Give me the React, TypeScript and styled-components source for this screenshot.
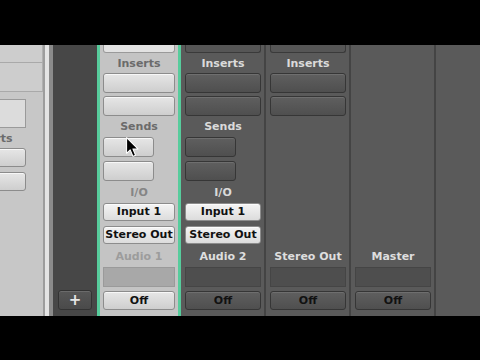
import styled, { createGlobalStyle } from "styled-components";

const GlobalStyle = createGlobalStyle`
  body {
    margin: 0;
    background: #000;
    font-family: "DejaVu Sans", "Liberation Sans", sans-serif;
  }
`;

type StripData = {
  name: string;
  selected?: boolean;
  inserts?: boolean;
  sends?: boolean;
  io?: boolean;
};

const strips: StripData[] = [
  { name: "Audio 1", selected: true, inserts: true, sends: true, io: true },
  { name: "Audio 2", inserts: true, sends: true, io: true },
  { name: "Stereo Out", inserts: true },
  { name: "Master" },
];

const App = () => {
  return (
    <Screen>
      <GlobalStyle />
      <Mixer>
        <LeftPanel>
          <PanelRow $h={18} />
          <PanelRow $h={29} />
          <Inspector>
            <Field />
            <Label $h={20} $tone="#6b6b6b">
              Inserts
            </Label>
            <SlotStack $gap={5}>
              <Slot $light $h={19} />
              <Slot $light $h={19} />
            </SlotStack>
          </Inspector>
        </LeftPanel>
        <Divider />
        <ToolColumn>
          <AddButton>+</AddButton>
        </ToolColumn>
        {strips.map((s) => (
          <Strip key={s.name} $selected={!!s.selected}>
            {s.inserts && (
              <>
                <TopStub $light={!!s.selected} />
                <Label $h={20} $tone={s.selected ? "#6b6b6b" : "#dadada"}>
                  Inserts
                </Label>
                <SlotStack>
                  <Slot $light={!!s.selected} />
                  <Slot $light={!!s.selected} />
                </SlotStack>
              </>
            )}
            {s.sends && (
              <>
                <Label $h={21} $tone={s.selected ? "#6b6b6b" : "#dadada"}>
                  Sends
                </Label>
                <SlotStack $gap={4}>
                  <Slot $light={!!s.selected} $narrow />
                  <Slot $light={!!s.selected} $narrow />
                </SlotStack>
              </>
            )}
            {s.io && (
              <>
                <Label $h={22} $tone={s.selected ? "#858585" : "#dadada"}>
                  I/O
                </Label>
                <SlotStack $gap={5}>
                  <Slot $light $bright $h={18}>
                    Input 1
                  </Slot>
                  <Slot $light $bright $h={18}>
                    Stereo Out
                  </Slot>
                </SlotStack>
              </>
            )}
            <Bottom>
              <Label $h={21} $tone={s.selected ? "#9c9c9c" : "#dedede"}>
                {s.name}
              </Label>
              <NameField $light={!!s.selected} />
              <Slot $light={!!s.selected} $h={19}>
                Off
              </Slot>
            </Bottom>
          </Strip>
        ))}
        <Filler />
      </Mixer>
      <Cursor width="14" height="21" viewBox="0 0 12 18">
        <path
          d="M0.5 0.5 L0.5 14 L3.6 11 L6 16.6 L8.2 15.6 L5.9 10.2 L10.2 10.2 Z"
          fill="#000"
          stroke="#fff"
          strokeWidth="0.9"
          strokeLinejoin="round"
        />
      </Cursor>
    </Screen>
  );
};

const Screen = styled.div`
  position: relative;
  width: 480px;
  height: 360px;
  background: #000;
  padding-top: 45px;
  box-sizing: border-box;
  overflow: hidden;
`;

const Mixer = styled.div`
  display: flex;
  height: 271px;
`;

const LeftPanel = styled.div`
  width: 45px;
  flex: none;
  background: #c7c7c7;
  border-right: 2px solid #9d9d9d;
  box-sizing: border-box;
  display: flex;
  flex-direction: column;
  overflow: hidden;
`;

const PanelRow = styled.div<{ $h: number }>`
  height: ${(p) => p.$h}px;
  flex: none;
  box-sizing: border-box;
  background: #cdcdcd;
  border-bottom: 1px solid #a9a9a9;
  border-right: 1px solid #b0b0b0;
`;

const Inspector = styled.div`
  width: 70px;
  margin-left: -44px;
  padding-top: 7px;
  display: flex;
  flex-direction: column;
`;

const Field = styled.div`
  height: 29px;
  background: #dcdcdc;
  border: 1px solid #9a9a9a;
  box-sizing: border-box;
`;

const Divider = styled.div`
  width: 8px;
  flex: none;
  background: linear-gradient(to right, #e4e4e4 0 4px, #8b8b8b 4px 8px);
`;

const ToolColumn = styled.div`
  width: 44px;
  flex: none;
  background: #474747;
  display: flex;
  flex-direction: column;
  justify-content: flex-end;
  align-items: center;
  padding-bottom: 6px;
  box-sizing: border-box;
`;

const AddButton = styled.button`
  width: 34px;
  height: 20px;
  padding: 0;
  border: 1px solid #333;
  border-radius: 3px;
  background: linear-gradient(#575757, #4a4a4a);
  box-shadow: inset 0 1px 0 rgba(255, 255, 255, 0.12);
  color: #e6e6e6;
  font-family: "DejaVu Sans", sans-serif;
  font-weight: 700;
  font-size: 15px;
  line-height: 18px;
`;

const Strip = styled.div<{ $selected: boolean }>`
  width: ${(p) => (p.$selected ? 86 : 85)}px;
  flex: none;
  box-sizing: border-box;
  display: flex;
  flex-direction: column;
  padding: ${(p) => (p.$selected ? "0 3px" : "0 3px 0 4px")};
  background: ${(p) => (p.$selected ? "#c4c4c4" : "#5a5a5a")};
  border-left: ${(p) => (p.$selected ? "3px solid #57cc9c" : "none")};
  border-right: ${(p) => (p.$selected ? "3px solid #57cc9c" : "2px solid #444")};
  &:nth-of-type(4) {
    width: 84px;
  }
`;

const TopStub = styled.div<{ $light: boolean }>`
  height: 8px;
  flex: none;
  border: 1px solid ${(p) => (p.$light ? "#9a9a9a" : "#3a3a3a")};
  border-top: none;
  border-radius: 0 0 3px 3px;
  background: ${(p) => (p.$light ? "#e2e2e2" : "#565656")};
  box-sizing: border-box;
`;

const Label = styled.div<{ $tone: string; $h?: number }>`
  height: ${(p) => p.$h ?? 19}px;
  flex: none;
  display: flex;
  align-items: center;
  justify-content: center;
  white-space: nowrap;
  font-size: 11px;
  font-weight: 700;
  color: ${(p) => p.$tone};
`;

const SlotStack = styled.div<{ $gap?: number }>`
  display: flex;
  flex-direction: column;
  gap: ${(p) => p.$gap ?? 3}px;
`;

const Slot = styled.button<{
  $light?: boolean;
  $bright?: boolean;
  $narrow?: boolean;
  $h?: number;
}>`
  height: ${(p) => p.$h ?? 20}px;
  width: ${(p) => (p.$narrow ? "51px" : "100%")};
  flex: none;
  padding: 0;
  box-sizing: border-box;
  border-radius: 3px;
  border: 1px solid ${(p) => (p.$light ? "#8c8c8c" : "#363636")};
  background: ${(p) =>
    p.$bright
      ? "linear-gradient(#f4f4f4, #dcdcdc)"
      : p.$light
      ? "linear-gradient(#e6e6e6, #cecece)"
      : "linear-gradient(#5f5f5f, #4f4f4f)"};
  box-shadow: inset 0 1px 0
    ${(p) => (p.$light ? "rgba(255,255,255,0.7)" : "rgba(255,255,255,0.1)")};
  color: #111;
  font-family: "DejaVu Sans", sans-serif;
  font-size: 11px;
  font-weight: 700;
  line-height: 16px;
  white-space: nowrap;
`;

const Bottom = styled.div`
  margin-top: auto;
  padding-bottom: 6px;
  display: flex;
  flex-direction: column;
  & > button {
    margin-top: 4px;
  }
`;

const NameField = styled.div<{ $light: boolean }>`
  height: 20px;
  box-sizing: border-box;
  background: ${(p) => (p.$light ? "#a8a8a8" : "#4e4e4e")};
  border: 1px solid ${(p) => (p.$light ? "#9a9a9a" : "#454545")};
`;

const Filler = styled.div`
  flex: 1;
  background: #5a5a5a;
`;

const Cursor = styled.svg`
  position: absolute;
  left: 126px;
  top: 137px;
`;

export default App;
